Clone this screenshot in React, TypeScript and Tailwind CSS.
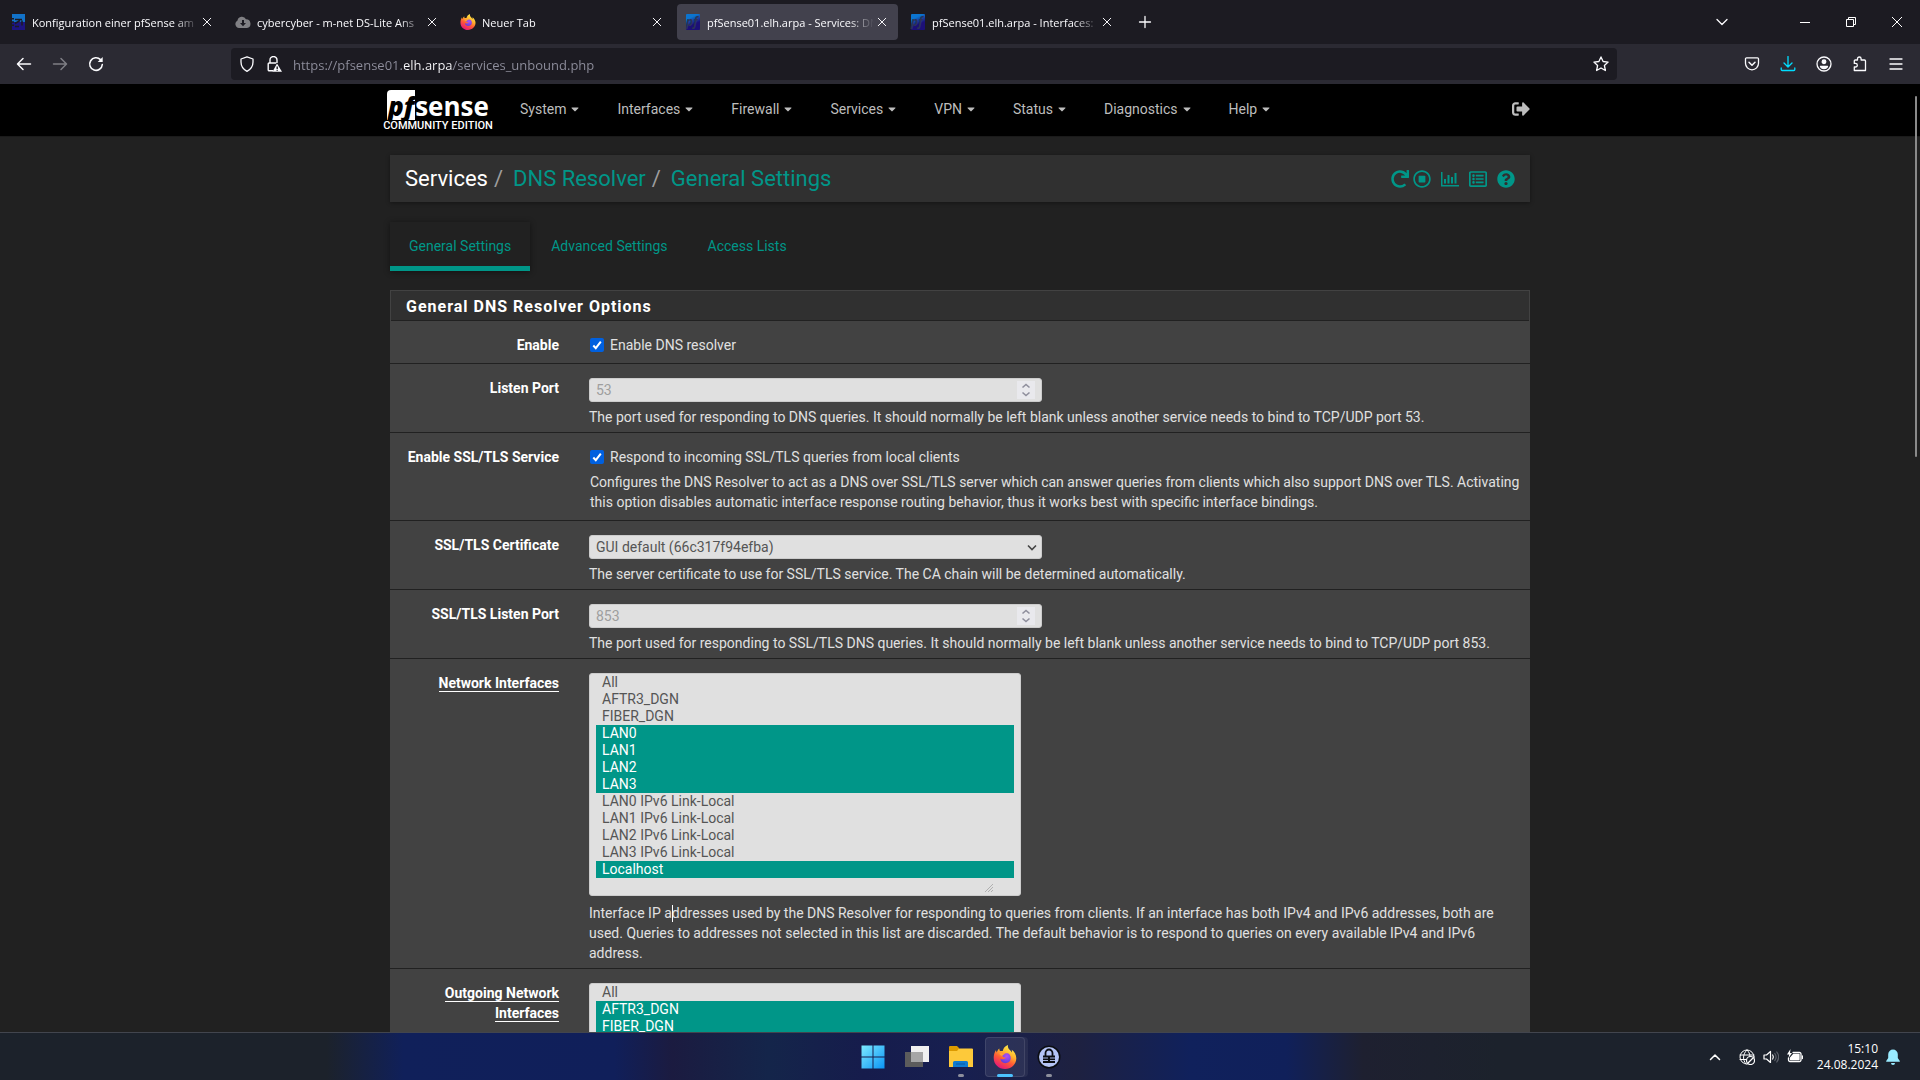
import React from 'react'
import {
  FaQuestionCircle,
  FaRegListAlt,
  FaRegStopCircle,
  FaRedo,
  FaSignOutAlt,
  FaCaretDown,
} from 'react-icons/fa'

const menus = ['System', 'Interfaces', 'Firewall', 'Services', 'VPN', 'Status', 'Diagnostics', 'Help']

const interfaces = [
  'All',
  'AFTR3_DGN',
  'FIBER_DGN',
  'LAN0',
  'LAN1',
  'LAN2',
  'LAN3',
  'LAN0 IPv6 Link-Local',
  'LAN1 IPv6 Link-Local',
  'LAN2 IPv6 Link-Local',
  'LAN3 IPv6 Link-Local',
  'Localhost',
]

const FirefoxLogo = ({ id, className }: { id: string; className: string }) => (
  <svg viewBox="0 0 24 24" className={className} aria-hidden="true">
    <defs>
      <linearGradient id={`${id}-a`} x1="0.8" y1="0.05" x2="0.3" y2="1">
        <stop offset="0" stopColor="#fff44f" />
        <stop offset="0.35" stopColor="#ffb32c" />
        <stop offset="0.62" stopColor="#ff5a36" />
        <stop offset="1" stopColor="#e5147c" />
      </linearGradient>
      <radialGradient id={`${id}-b`} cx="0.6" cy="0.3" r="0.8">
        <stop offset="0" stopColor="#b050f5" />
        <stop offset="1" stopColor="#5a3bd6" />
      </radialGradient>
    </defs>
    <path
      d="M15 0c-.4 2 .2 3.300 1.600 4.700 1 .9 1.700 1.800 2.100 2.700.3-.8.300-1.700 0-2.600 2.600 1.700 4.600 5 4.600 8.500C23.300 19.500 18.300 24 12 24S.7 19.300.7 13c0-3 .8-5.700 2.300-8 .1 1 .3 1.700.8 2.400.5-1.800 1.300-3 2.500-4 0 1 .2 1.900.7 2.600 1 .1 1.800.1 2.700 0C10.400 3.200 12 1 15 0z"
      fill={`url(#${id}-a)`}
    />
    <path
      d="M7.500 9.600c1-.5 2.300-.4 3.300.2 1.200-1.900 4.300-2 5.900 0 1.700 2.200 1.400 5.500-.7 7.200-2.200 1.700-5.600 1.500-7.500-.5-.8-.9-1.100-1.900-1-3 1 .9 2.400 1.100 3.700.5 1-.5 1.500-1 1.700-1.500-.9 0-2.200.1-2.800-.6-.5-.9-1.400-1.700-2.600-2.300z"
      fill={`url(#${id}-b)`}
    />
    <path d="M6.200 8.600c1.700-.8 3.700-.3 4.700 1-1.100.3-1.400.9-1.600 1.600-.9-.4-2.100-1.300-3.100-2.600z" fill="#ffa436" />
  </svg>
)

const PfFavicon = ({ id }: { id: string }) => (
  <svg viewBox="0 0 16 16" className="size-4 shrink-0" aria-hidden="true">
    <defs>
      <linearGradient id={id} x1="0" y1="0" x2="0.4" y2="1">
        <stop offset="0.3" stopColor="#0b74cf" />
        <stop offset="0.75" stopColor="#1c1077" />
      </linearGradient>
    </defs>
    <rect x="1" width="14" height="16" rx="1" fill={`url(#${id})`} />
    <text x="1" y="12" fontSize="12" fontWeight="700" fontStyle="italic" fontFamily="Open Sans, sans-serif" fill="#2b3358">
      pf
    </text>
  </svg>
)

const NetFavicon = () => (
  <svg viewBox="0 0 16 16" className="size-4 shrink-0" aria-hidden="true">
    <path d="M2 0h13v8H2z" fill="#1272c8" />
    <path d="M2 8h13v8H2z" fill="#1d1580" />
    <path d="M5 5.500h7M5 9.500l5-3M12 6.500v5M5 12.500h4" stroke="#1c1b22" strokeWidth="1.500" />
    <path d="M1 4h3v1.500H1zM1 7.200h3v1.500H1zM1 10.500h3V12H1z" fill="#1c1b22" />
  </svg>
)

const CloudFavicon = () => (
  <svg viewBox="0 0 16 16" className="size-4 shrink-0" aria-hidden="true">
    <path d="M4 14a4 4 0 0 1-1.500-7.500A4.500 4.500 0 0 1 11 5.300 4.400 4.400 0 0 1 12 14z" fill="#808084" />
    <path d="M7 6h2v3h2l-3 3.300L5 9h2z" fill="#1c1b22" />
  </svg>
)

const tabs = [
  { title: 'Konfiguration einer pfSense am', icon: <NetFavicon /> },
  { title: 'cybercyber - m-net DS-Lite Ans', icon: <CloudFavicon /> },
  { title: 'Neuer Tab', icon: <FirefoxLogo id="tab" className="size-4 shrink-0" /> },
  { title: 'pfSense01.elh.arpa - Services: DN', icon: <PfFavicon id="pf1" />, active: true },
  { title: 'pfSense01.elh.arpa - Interfaces:', icon: <PfFavicon id="pf2" /> },
]

const Glyph = ({ children, className = 'size-4' }: { children: React.ReactNode; className?: string }) => (
  <svg
    viewBox="0 0 16 16"
    className={className}
    fill="none"
    stroke="currentColor"
    strokeWidth="1.3"
    strokeLinecap="round"
    strokeLinejoin="round"
    aria-hidden="true"
  >
    {children}
  </svg>
)

const ToolButton = ({ label, children, className = '' }: { label: string; children: React.ReactNode; className?: string }) => (
  <button aria-label={label} className={`flex size-9 items-center justify-center ${className}`}>
    <Glyph>{children}</Glyph>
  </button>
)

const BrowserChrome = () => (
  <header className="font-['Open_Sans',sans-serif] text-[#fbfbfe]">
    <div className="flex h-11 items-center bg-[#1c1b22] pl-0.5">
      <div className="flex gap-1">
        {tabs.map((tab) => (
          <div
            key={tab.title}
            className={`flex h-9 w-[221px] items-center rounded px-2 ${tab.active ? 'bg-[#42414d]' : ''}`}
          >
            {tab.icon}
            <button className="ml-1.5 flex-1 overflow-hidden pt-0.5 text-left text-[11px] leading-5 whitespace-nowrap [mask-image:linear-gradient(to_right,#000_85%,transparent)]">
              {tab.title}
            </button>
            <button aria-label="Close tab" className="flex size-4 items-center justify-center">
              <Glyph className="size-3">
                <path d="M3 3l10 10M13 3L3 13" />
              </Glyph>
            </button>
          </div>
        ))}
      </div>
      <button aria-label="New tab" className="ml-1 flex size-9 items-center justify-center">
        <Glyph>
          <path d="M8 2.500v11M2.500 8h11" />
        </Glyph>
      </button>
      <div className="ml-auto flex items-center">
        <button aria-label="List all tabs" className="mr-[42px] flex size-9 items-center justify-center">
          <Glyph>
            <path d="M3 5.500l5 5 5-5" />
          </Glyph>
        </button>
        <button aria-label="Minimize" className="flex h-9 w-[46px] items-center justify-center">
          <span className="h-px w-2.5 bg-white" />
        </button>
        <button aria-label="Restore" className="flex h-9 w-[46px] items-center justify-center">
          <svg viewBox="0 0 10 10" className="size-2.5" fill="none" stroke="#fff" aria-hidden="true">
            <path d="M.5 2.500h7v7h-7zM2.500 2.500v-2h7v7h-2" />
          </svg>
        </button>
        <button aria-label="Close" className="flex h-9 w-[46px] items-center justify-center">
          <svg viewBox="0 0 10 10" className="size-2.5" stroke="#fff" aria-hidden="true">
            <path d="M0 0l10 10M10 0L0 10" />
          </svg>
        </button>
      </div>
    </div>
    <div className="flex h-10 items-center bg-[#2b2a33] px-1.5">
      <ToolButton label="Back">
        <path d="M14.500 8H2M7 2.500L1.500 8 7 13.500" strokeWidth="1.500" />
      </ToolButton>
      <ToolButton label="Forward" className="opacity-40">
        <path d="M1.500 8H14M9 2.500L14.500 8 9 13.500" strokeWidth="1.500" />
      </ToolButton>
      <ToolButton label="Reload">
        <path d="M14.300 8.500A6.300 6.300 0 1 1 12.500 3.600" strokeWidth="1.600" />
        <path d="M14.700 1v5h-5z" fill="currentColor" stroke="none" />
      </ToolButton>
      <div className="mx-[117px] flex h-8 flex-1 items-center rounded bg-[#1c1b22] px-2">
        <Glyph className="size-4">
          <path d="M8 .8l6 2.200v3c0 4-2 7.200-6 9.300C4 13.200 2 10 2 6V3z" />
        </Glyph>
        <svg viewBox="0 0 16 16" className="ml-[11px] size-4" fill="none" stroke="currentColor" strokeWidth="1.400" aria-hidden="true">
          <path d="M4 7V4a3.500 3.500 0 0 1 7 0v3M7 14.800H3.200a1 1 0 0 1-1-1V8a1 1 0 0 1 1-1h7" />
          <path d="M11 7.500l5 8.300H6.500z" fill="currentColor" stroke="none" />
          <path d="M11.200 10.500v2.500M11.200 13.800v1" stroke="#1c1b22" />
        </svg>
        <input
          aria-label="Address"
          defaultValue="https://pfsense01.elh.arpa/services_unbound.php"
          className="ml-[11px] h-8 flex-1 bg-[linear-gradient(to_right,#8f8f9d_111px,#fbfbfe_111px,#fbfbfe_160px,#8f8f9d_160px)] bg-clip-text pt-0.5 text-[13px] text-transparent outline-none"
        />
        <button aria-label="Bookmark" className="flex size-4 items-center justify-center">
          <Glyph>
            <path d="M8 .9l2.100 4.600 5 .6-3.700 3.400 1 5L8 12l-4.400 2.500 1-5L.9 6.100l5-.6z" />
          </Glyph>
        </button>
      </div>
      <div className="flex">
        <ToolButton label="Pocket">
          <path d="M2.500 1.800h11a1 1 0 0 1 1 1v4.500a6.500 6.500 0 0 1-13 0V2.800a1 1 0 0 1 1-1z" />
          <path d="M5 6.300l3 3 3-3" strokeWidth="1.500" />
        </ToolButton>
        <ToolButton label="Downloads" className="text-[#00ddff]">
          <path d="M8 .5v10M4 7l4 4 4-4M1.200 12v1.500a1 1 0 0 0 1 1h11.600a1 1 0 0 0 1-1V12" />
        </ToolButton>
        <ToolButton label="Account">
          <circle cx="8" cy="8" r="7" />
          <circle cx="8" cy="5.800" r="1.800" fill="currentColor" />
          <path d="M4.500 10.300h7c-.5 1.700-1.800 2.300-3.500 2.300s-3-.6-3.500-2.300z" fill="currentColor" />
        </ToolButton>
        <ToolButton label="Extensions">
          <path d="M5.500 4V2.800a1.800 1.800 0 0 1 3.600 0V4h3.400a1 1 0 0 1 1 1v9.500H2.300V11h1.200a1.800 1.800 0 0 0 0-3.600H2.300V5a1 1 0 0 1 1-1z" />
        </ToolButton>
        <ToolButton label="Menu">
          <path d="M2 3h12M2 8h12M2 13h12" />
        </ToolButton>
      </div>
    </div>
  </header>
)

const Navbar = () => (
  <nav className="border-b border-[#1a1a1a] bg-black">
    <div className="mx-auto flex h-[52px] w-full max-w-[1150px] items-center">
      <a href="#" className="flex w-[106px] flex-col items-center pt-0.5 text-white">
        <span className="flex h-[30px] items-end">
          <span className="flex h-[30px] w-7 items-end justify-center rounded-tl-sm bg-white font-['Open_Sans',sans-serif] text-[26px] leading-7 font-extrabold text-black italic">
            pf
          </span>
          <span className="font-['Open_Sans',sans-serif] text-[26px] leading-7 font-bold">sense</span>
        </span>
        <span className="text-[11px] leading-3 font-medium whitespace-nowrap">COMMUNITY EDITION</span>
      </a>
      <ul className="ml-2.5 flex pb-0.5">
        {menus.map((menu) => (
          <li key={menu}>
            <button className="flex items-center gap-[5px] px-[19px] text-sm text-[#bdbdbd]">
              {menu}
              <FaCaretDown className="h-3 w-2" />
            </button>
          </li>
        ))}
      </ul>
      <a href="#" aria-label="Logout" className="ml-auto pr-[5px] pb-0.5 text-[#bdbdbd]">
        <FaSignOutAlt className="size-[18px]" />
      </a>
    </div>
  </nav>
)

const PageHeader = () => (
  <div className="flex h-[47px] items-center justify-between bg-[#303030] px-[15px] shadow-[0_1px_4px_rgba(0,0,0,0.4)]">
    <ol className="flex gap-1.5 text-[22px] text-[#9e9e9e]">
      <li className="text-white">Services</li>
      <li aria-hidden="true">/</li>
      <li className="pl-1">
        <a href="#" className="text-[#009688]">DNS Resolver</a>
      </li>
      <li aria-hidden="true">/</li>
      <li className="pl-1">
        <a href="#" className="text-[#009688]">General Settings</a>
      </li>
    </ol>
    <div className="flex items-center text-[#009688]">
      <a href="#" aria-label="Restart service" className="mr-1">
        <FaRedo className="size-[18px]" />
      </a>
      <a href="#" aria-label="Stop service" className="mr-2.5">
        <FaRegStopCircle className="size-[18px]" />
      </a>
      <a href="#" aria-label="Status" className="mr-2.5">
        <svg viewBox="0 0 18 18" className="size-[18px]" fill="currentColor" aria-hidden="true">
          <path d="M0 2h1.500v13H18v1.500H0zM3 9h2v4.500H3zM6.500 5h2v8.500h-2zM10 7h2v6.500h-2zM13.500 3h2v10.500h-2z" />
        </svg>
      </a>
      <a href="#" aria-label="Log" className="mr-2.5">
        <FaRegListAlt className="size-[18px]" />
      </a>
      <a href="#" aria-label="Help">
        <FaQuestionCircle className="size-[18px]" />
      </a>
    </div>
  </div>
)

type RowProps = { label: string; id: string; underline?: boolean; check?: boolean; children: React.ReactNode }

const Row = ({ label, id, underline, check, children }: RowProps) => (
  <div className={`flex border-b border-[#212121] pt-3.5 ${check ? 'pb-2' : 'pb-[5px]'}`}>
    <label htmlFor={id} className="w-[184px] shrink-0 px-[15px] text-right font-bold text-white">
      {underline ? <span className="border-b border-white">{label}</span> : label}
    </label>
    <div className="flex-1 pr-2.5 pl-[15px]">{children}</div>
  </div>
)

const PortInput = ({ id, placeholder }: { id: string; placeholder: string }) => (
  <div className="relative w-[453px]">
    <input
      id={id}
      type="number"
      placeholder={placeholder}
      className="block h-6 w-full appearance-none rounded-[3px] border border-[#cccccc] bg-[#e0e0e0] px-1.5 outline-none [-moz-appearance:textfield] placeholder:text-[#9e9e9e] [&::-webkit-inner-spin-button]:appearance-none"
    />
    <span className="pointer-events-none absolute top-[3px] right-[7px] flex h-[18px] w-[18px] items-center justify-center bg-[#e9e9ed] text-[#8f8f9d]">
      <svg viewBox="0 0 10 14" className="h-3.5 w-2.5" fill="none" stroke="currentColor" strokeWidth="1.600" aria-hidden="true">
        <path d="M1.500 4.500L5 1.500l3.500 3M1.500 9.500L5 12.500l3.500-3" />
      </svg>
    </span>
  </div>
)

const InterfaceList = ({ id, selected }: { id: string; selected: string[] }) => (
  <div className="relative w-[432px]">
    <select
      id={id}
      multiple
      defaultValue={selected}
      className="block h-[223px] w-full overflow-hidden rounded-[3px] border border-[#cccccc] bg-[#e0e0e0] px-1.5 text-[#555555] outline-none"
    >
      {interfaces.map((name) => (
        <option
          key={name}
          className="h-[17px] min-h-0 p-0 pl-1.5 leading-[17px] checked:bg-linear-to-r checked:from-[#009688] checked:to-[#009688] checked:[-webkit-text-fill-color:#fff]"
        >
          {name}
        </option>
      ))}
    </select>
    <svg viewBox="0 0 8 8" className="absolute right-7 bottom-1 size-2" stroke="#b0b0b0" aria-hidden="true">
      <path d="M0 8L8 0M3 8l5-5M6 8l2-2" />
    </svg>
  </div>
)

const CheckLine = ({ id, text }: { id: string; text: string }) => (
  <div className="flex h-5 items-center gap-1.5 pl-px">
    <span className="relative flex size-3.5">
      <input id={id} type="checkbox" defaultChecked className="size-3.5 appearance-none rounded-[2px] bg-[#0060df]" />
      <svg viewBox="0 0 14 14" className="pointer-events-none absolute inset-0" fill="none" stroke="#fff" strokeWidth="2" aria-hidden="true">
        <path d="M3.300 7.500l2.500 2.700 5-6.500" />
      </svg>
    </span>
    <label htmlFor={id}>{text}</label>
  </div>
)

const Panel = () => (
  <section className="mt-5 bg-[#424242]">
    <h2 className="mx-px mt-px border-b border-[#212121] bg-[#303030] px-[15px] pt-1.5 pb-[3px] text-base leading-5 font-bold tracking-[1px] text-white outline outline-[#424242]">
      General DNS Resolver Options
    </h2>
    <form className="text-[#e0e0e0]">
      <Row label="Enable" id="enable" check>
        <CheckLine id="enable" text="Enable DNS resolver" />
      </Row>
      <Row label="Listen Port" id="port">
        <PortInput id="port" placeholder="53" />
        <p className="mt-[5px]">
          The port used for responding to DNS queries. It should normally be left blank unless another service needs to bind
          to TCP/UDP port 53.
        </p>
      </Row>
      <Row label="Enable SSL/TLS Service" id="enablessl" check>
        <CheckLine id="enablessl" text="Respond to incoming SSL/TLS queries from local clients" />
        <p className="mt-[5px] pl-px">
          Configures the DNS Resolver to act as a DNS over SSL/TLS server which can answer queries from clients which also
          support DNS over TLS. Activating this option disables automatic interface response routing behavior, thus it works
          best with specific interface bindings.
        </p>
      </Row>
      <Row label="SSL/TLS Certificate" id="cert">
        <div className="relative w-[453px]">
          <select
            id="cert"
            className="block h-6 w-full appearance-none rounded-[3px] border border-[#cccccc] bg-[#e0e0e0] px-1.5 text-[#555555] outline-none"
          >
            <option>GUI default (66c317f94efba)</option>
          </select>
          <svg viewBox="0 0 10 10" className="pointer-events-none absolute top-[7px] right-[5px] size-2.5" fill="none" stroke="#444" strokeWidth="1.600" aria-hidden="true">
            <path d="M1 3.500l4 4 4-4" />
          </svg>
        </div>
        <p className="mt-[5px]">
          The server certificate to use for SSL/TLS service. The CA chain will be determined automatically.
        </p>
      </Row>
      <Row label="SSL/TLS Listen Port" id="tlsport">
        <PortInput id="tlsport" placeholder="853" />
        <p className="mt-[5px]">
          The port used for responding to SSL/TLS DNS queries. It should normally be left blank unless another service needs
          to bind to TCP/UDP port 853.
        </p>
      </Row>
      <Row label="Network Interfaces" id="active_interface" underline>
        <InterfaceList id="active_interface" selected={['LAN0', 'LAN1', 'LAN2', 'LAN3', 'Localhost']} />
        <div className="relative mt-[7px]">
          <p>
            Interface IP addresses used by the DNS Resolver for responding to queries from clients. If an interface has both
            IPv4 and IPv6 addresses, both are used. Queries to addresses not selected in this list are discarded. The default
            behavior is to respond to queries on every available IPv4 and IPv6 address.
          </p>
          {/* text cursor */}
          <span className="absolute top-0.5 left-[83px] h-[17px] w-px bg-white" />
        </div>
      </Row>
      <Row label="Outgoing Network Interfaces" id="outgoing_interface" underline>
        <InterfaceList id="outgoing_interface" selected={['AFTR3_DGN', 'FIBER_DGN']} />
      </Row>
    </form>
  </section>
)

const Taskbar = () => (
  <footer className="relative flex h-12 shrink-0 items-center justify-center border-t border-[#42454e] bg-[linear-gradient(to_right,#1c222b_0%,#1c222b_17%,#10205a_21%,#101f5a_32%,#1b1b40_35%,#14254a_40%,#161c4c_45%,#171f50_50%,#1e2140_56%,#10215c_62%,#10205a_67%,#1e2030_71%,#1c222c_78%)] font-['Open_Sans',sans-serif]">
    <div className="flex h-full items-center gap-1 pl-0.5">
      <button aria-label="Start" className="flex size-10 items-center justify-center">
        <svg viewBox="0 0 24 24" className="size-6" aria-hidden="true">
          <defs>
            <linearGradient id="win" x1="0" y1="0" x2="1" y2="1">
              <stop offset="0" stopColor="#7deaff" />
              <stop offset="1" stopColor="#0a94f5" />
            </linearGradient>
          </defs>
          <path d="M.5.500h11v11H.500zM12.500.500h11v11h-11zM.5 12.500h11v11H.500zM12.500 12.500h11v11h-11z" fill="url(#win)" />
        </svg>
      </button>
      <button aria-label="Task view" className="flex size-10 items-center justify-center">
        <svg viewBox="0 0 24 24" className="size-6" aria-hidden="true">
          <path d="M6 1h18v16H6z" fill="#f0f0f0" />
          <path d="M0 7h18v15H0z" fill="#5c5c5c" />
          <path d="M6 7h12v10H6z" fill="#a6a6a6" />
        </svg>
      </button>
      <button aria-label="Explorer" className="relative flex size-10 items-center justify-center">
        <svg viewBox="0 0 24 24" className="size-6" aria-hidden="true">
          <path d="M0 2a1 1 0 0 1 1-1h7l2 2v3H0z" fill="#dc9a00" />
          <path d="M0 6h8l2-2.500h13a1 1 0 0 1 1 1V22H0z" fill="#fdc93a" />
          <path d="M4 22v-4.500A1.500 1.500 0 0 1 5.500 16h12a1.500 1.500 0 0 1 1.500 1.500V22z" fill="#0f7bd0" />
          <path d="M7 19h9" stroke="#0a5ba5" />
        </svg>
        <span className="absolute bottom-0 h-[3px] w-1.5 rounded-full bg-[#8d8f9c]" />
      </button>
      <button aria-label="Firefox" className="relative flex size-10 items-center justify-center rounded border border-white/10 bg-white/8 shadow-[3px_0_0_rgba(255,255,255,0.06)]">
        <FirefoxLogo id="task" className="size-6" />
        <span className="absolute -bottom-px h-[3px] w-4 rounded-full bg-[#4cc2ff]" />
      </button>
      <button aria-label="VPN" className="relative flex size-10 items-center justify-center">
        <svg viewBox="0 0 24 24" className="size-6" aria-hidden="true">
          <circle cx="12" cy="12" r="11.500" fill="#0b0d12" />
          <circle cx="12" cy="12" r="10" fill="#b4c4f6" />
          <path d="M8.500 11V8a3.500 3.500 0 0 1 7 0v3" fill="none" stroke="#0b0d12" strokeWidth="1.800" />
          <path d="M6 10.500h12V18H6z" fill="#0b0d12" />
          <path d="M6 13h5M13 13h5M6 15.500h5M13 15.500h5" stroke="#b4c4f6" strokeWidth=".9" />
        </svg>
        <span className="absolute bottom-0 h-[3px] w-1.5 rounded-full bg-[#8d8f9c]" />
      </button>
    </div>
    <div className="absolute inset-y-0 right-5 flex items-center text-white">
      <button aria-label="Show hidden icons" className="mr-4">
        <Glyph>
          <path d="M3.500 10.500L8 6l4.500 4.500" strokeWidth="1.500" />
        </Glyph>
      </button>
      <button aria-label="Network and sound" className="mr-3.5 flex items-center gap-2">
        <Glyph>
          <circle cx="8" cy="8" r="7" strokeWidth="1" />
          <path d="M1 6h14M1 10.500h6M8 1C3.500 5 3.500 11 7 15M8 1c2 2 3 4 3 6.500" strokeWidth="1" />
          <circle cx="11.500" cy="11.500" r="4" fill="#1c222c" strokeWidth="1.200" />
          <path d="M9 14l5-5" strokeWidth="1.200" />
        </Glyph>
        <Glyph>
          <path d="M1 6h2.500L7.500 2.500v11L3.500 10H1z" strokeWidth="1.200" />
          <path d="M9.700 6c.8 1.200.8 2.800 0 4" strokeWidth="1.200" />
          <path d="M11.800 4.500c1.500 2 1.500 5 0 7M13.800 3c2.200 3 2.200 7 0 10" stroke="#5b6069" strokeWidth="1.200" />
        </Glyph>
        <Glyph>
          <path d="M6 3.500h6.500A1.500 1.500 0 0 1 14 5v6a1.500 1.500 0 0 1-1.500 1.500H3A1.500 1.500 0 0 1 1.500 11V9" />
          <path d="M6.500 5.500H12v5H3.500V9z" fill="currentColor" />
          <path d="M3.500 0L0 5.500h2.200L1.500 9 5 4H3z" fill="currentColor" stroke="none" />
          <path d="M15.400 7v2.500" />
        </Glyph>
      </button>
      <time className="text-right text-xs leading-4">
        15:10
        <br />
        24.08.2024
      </time>
      <button aria-label="Notifications" className="ml-2 text-[#99ebff]">
        <svg viewBox="0 0 14 16" className="h-4 w-3.5" fill="currentColor" aria-hidden="true">
          <path d="M7 .5a4.800 4.800 0 0 1 4.800 4.800V9l2 3v.8H.2V12l2-3V5.300A4.800 4.800 0 0 1 7 .5zM5 14h4a2 2 0 0 1-4 0z" />
        </svg>
      </button>
    </div>
  </footer>
)

const App = () => {
  return (
    <div className="flex h-screen flex-col overflow-hidden bg-[#212121] font-[Roboto,sans-serif] text-sm">
      <BrowserChrome />
      <div className="relative min-h-0 flex-1 overflow-hidden">
        <Navbar />
        <main className="mx-auto w-full max-w-[1140px] pt-[18px]">
          <PageHeader />
          <div className="mt-5 flex gap-0.5 text-[#009688]">
            <a href="#" className="flex h-[49px] items-center border-b-[5px] border-[#009688] px-[19px] pt-1 shadow-[0_1px_6px_rgba(0,0,0,0.45)]">
              General Settings
            </a>
            <a href="#" className="flex h-[49px] items-center border-b-[5px] border-transparent px-[19px] pt-1">
              Advanced Settings
            </a>
            <a href="#" className="flex h-[49px] items-center border-b-[5px] border-transparent px-[19px] pt-1">
              Access Lists
            </a>
          </div>
          <Panel />
        </main>
        <div className="absolute top-3 right-[3px] h-[361px] w-0.5 rounded-full bg-[#8a8a8a]" />
      </div>
      <Taskbar />
    </div>
  )
}

export default App
